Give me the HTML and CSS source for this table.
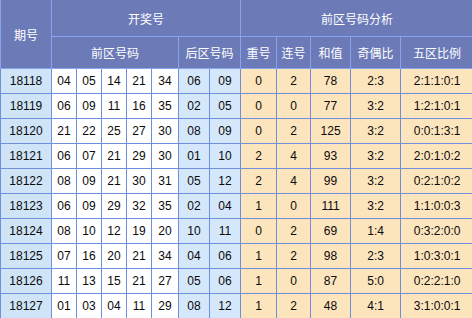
FILE: index.html
```html
<!DOCTYPE html>
<html lang="zh">
<head>
<meta charset="utf-8">
<link rel="stylesheet" href="styles.css">
</head>
<body>
<table class="grid">
  <colgroup>
    <col class="c-qh">
    <col class="c-n"><col class="c-n"><col class="c-n"><col class="c-n"><col class="c-n5">
    <col class="c-b"><col class="c-b">
    <col class="c-cf"><col class="c-lh"><col class="c-hz"><col class="c-jo"><col class="c-wq">
  </colgroup>
  <thead>
    <tr class="h1">
      <th rowspan="2">期号</th>
      <th colspan="7">开奖号</th>
      <th colspan="5">前区号码分析</th>
    </tr>
    <tr class="h2">
      <th colspan="5">前区号码</th>
      <th colspan="2">后区号码</th>
      <th>重号</th><th>连号</th><th>和值</th><th>奇偶比</th><th>五区比例</th>
    </tr>
  </thead>
  <tbody>
    <tr><td class="qh">18118</td><td>04</td><td>05</td><td>14</td><td>21</td><td>34</td><td class="bk">06</td><td class="bk">09</td><td class="an">0</td><td class="an">2</td><td class="an">78</td><td class="an">2:3</td><td class="an">2:1:1:0:1</td></tr>
    <tr><td class="qh">18119</td><td>06</td><td>09</td><td>11</td><td>16</td><td>35</td><td class="bk">02</td><td class="bk">05</td><td class="an">0</td><td class="an">0</td><td class="an">77</td><td class="an">3:2</td><td class="an">1:2:1:0:1</td></tr>
    <tr><td class="qh">18120</td><td>21</td><td>22</td><td>25</td><td>27</td><td>30</td><td class="bk">08</td><td class="bk">09</td><td class="an">0</td><td class="an">2</td><td class="an">125</td><td class="an">3:2</td><td class="an">0:0:1:3:1</td></tr>
    <tr><td class="qh">18121</td><td>06</td><td>07</td><td>21</td><td>29</td><td>30</td><td class="bk">01</td><td class="bk">10</td><td class="an">2</td><td class="an">4</td><td class="an">93</td><td class="an">3:2</td><td class="an">2:0:1:0:2</td></tr>
    <tr><td class="qh">18122</td><td>08</td><td>09</td><td>21</td><td>30</td><td>31</td><td class="bk">05</td><td class="bk">12</td><td class="an">2</td><td class="an">4</td><td class="an">99</td><td class="an">3:2</td><td class="an">0:2:1:0:2</td></tr>
    <tr><td class="qh">18123</td><td>06</td><td>09</td><td>29</td><td>32</td><td>35</td><td class="bk">02</td><td class="bk">04</td><td class="an">1</td><td class="an">0</td><td class="an">111</td><td class="an">3:2</td><td class="an">1:1:0:0:3</td></tr>
    <tr><td class="qh">18124</td><td>08</td><td>10</td><td>12</td><td>19</td><td>20</td><td class="bk">10</td><td class="bk">11</td><td class="an">0</td><td class="an">2</td><td class="an">69</td><td class="an">1:4</td><td class="an">0:3:2:0:0</td></tr>
    <tr><td class="qh">18125</td><td>07</td><td>16</td><td>20</td><td>21</td><td>34</td><td class="bk">04</td><td class="bk">06</td><td class="an">1</td><td class="an">2</td><td class="an">98</td><td class="an">2:3</td><td class="an">1:0:3:0:1</td></tr>
    <tr><td class="qh">18126</td><td>11</td><td>13</td><td>15</td><td>21</td><td>27</td><td class="bk">05</td><td class="bk">06</td><td class="an">1</td><td class="an">0</td><td class="an">87</td><td class="an">5:0</td><td class="an">0:2:2:1:0</td></tr>
    <tr><td class="qh">18127</td><td>01</td><td>03</td><td>04</td><td>11</td><td>29</td><td class="bk">08</td><td class="bk">12</td><td class="an">1</td><td class="an">2</td><td class="an">48</td><td class="an">4:1</td><td class="an">3:1:0:0:1</td></tr>
  </tbody>
</table>
</body>
</html>
```

FILE: styles.css
```css
html, body {
  margin: 0;
  padding: 0;
  overflow: hidden;
  background: #ffffff;
}

.grid {
  border-collapse: collapse;
  table-layout: fixed;
  width: 474px;
  margin-top: -1px;
  font-family: "Liberation Sans", Arial, "Noto Sans CJK SC", sans-serif;
  font-size: 12px;
  color: #0a0a0a;
}

.c-qh { width: 51px; }
.c-n { width: 25px; }
.c-n5 { width: 27px; }
.c-b { width: 31px; }
.c-cf { width: 36px; }
.c-lh { width: 34px; }
.c-hz { width: 40px; }
.c-jo { width: 50px; }
.c-wq { width: 73px; }

.grid th,
.grid td {
  border: 1px solid #6f8fdc;
  padding: 0;
  text-align: center;
  vertical-align: middle;
  white-space: nowrap;
  overflow: hidden;
}

.grid th {
  background: #6c7bb8;
  color: #ffffff;
  font-family: "Noto Sans CJK SC", "Liberation Sans", sans-serif;
  font-weight: normal;
  font-size: 12px;
  border-color: #88a4ee;
}

.h1 { height: 37px; }
.h2 { height: 32px; }

.grid tbody tr { height: 25px; }

.grid td { background: #ffffff; }
.grid td.qh { background: #d0e4f8; }
.grid td.bk { background: #d5e7fa; }
.grid td.an { background: #fce4bd; }
```
